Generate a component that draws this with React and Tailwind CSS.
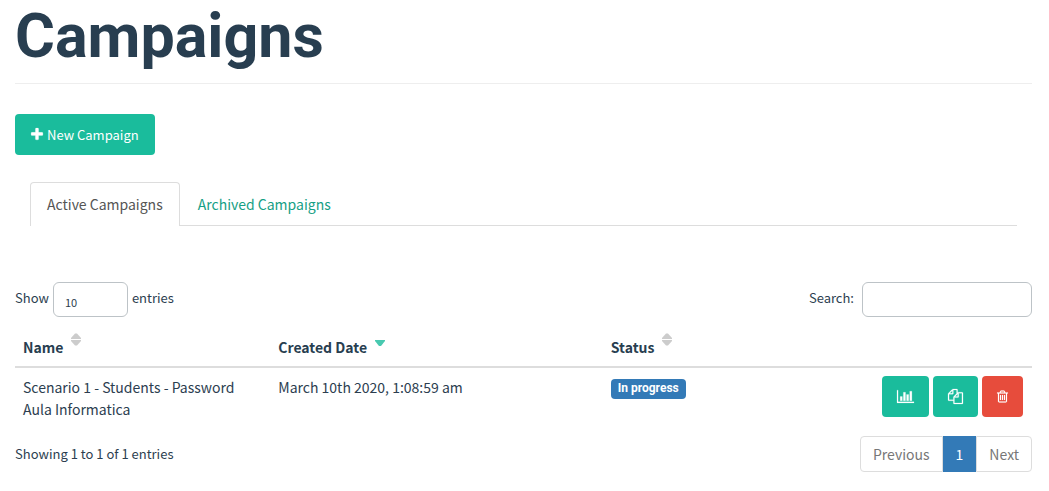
const ICONS = {
  plus: {
    box: '192 0 1408 1792',
    size: 'h-[15px] w-3',
    d: 'M1600 736v192q0 40-28 68t-68 28h-416v416q0 40-28 68t-68 28h-192q-40 0-68-28t-28-68v-416h-416q-40 0-68-28t-28-68v-192q0-40 28-68t68-28h416v-416q0-40 28-68t68-28h192q40 0 68 28t28 68v416h416q40 0 68 28t28 68z',
  },
  chart: {
    box: '0 0 2048 1792',
    size: 'h-[15px] w-[17px]',
    d: 'M640 896v512h-256v-512h256zM1024 384v1024h-256v-1024h256zM2048 1536v128h-2048v-1536h128v1408h1920zM1408 640v768h-256v-768h256zM1792 256v1152h-256v-1152h256z',
  },
  copy: {
    box: '0 0 1792 1792',
    size: 'h-[15px] w-[15px]',
    d: 'M1696 384q40 0 68 28t28 68v1216q0 40-28 68t-68 28h-960q-40 0-68-28t-28-68v-288h-544q-40 0-68-28t-28-68v-672q0-40 20-88t48-76l408-408q28-28 76-48t88-20h416q40 0 68 28t28 68v328q68-40 128-40h416zm-544 213l-299 299h299v-299zm-640-384l-299 299h299v-299zm196 647l316-316v-416h-384v416q0 40-28 68t-68 28h-416v640h512v-256q0-40 20-88t48-76zm956 804v-1152h-384v416q0 40-28 68t-68 28h-416v640h896z',
  },
  trash: {
    box: '192 0 1408 1792',
    size: 'h-[15px] w-[11px]',
    d: 'M704 736v576q0 14-9 23t-23 9h-64q-14 0-23-9t-9-23v-576q0-14 9-23t23-9h64q14 0 23 9t9 23zm256 0v576q0 14-9 23t-23 9h-64q-14 0-23-9t-9-23v-576q0-14 9-23t23-9h64q14 0 23 9t9 23zm256 0v576q0 14-9 23t-23 9h-64q-14 0-23-9t-9-23v-576q0-14 9-23t23-9h64q14 0 23 9t9 23zm128 724v-948h-896v948q0 22 7 40.5t14.5 27 10.5 8.5h832q3 0 10.5-8.5t14.5-27 7-40.5zm-672-1076h448l-48-117q-7-9-17-11h-317q-10 2-17 11zm928 32v64q0 14-9 23t-23 9h-96v948q0 83-47 143.5t-113 60.5h-832q-66 0-113-58.5t-47-141.5v-952h-96q-14 0-23-9t-9-23v-64q0-14 9-23t23-9h309l70-167q15-37 54-63t79-26h320q40 0 79 26t54 63l70 167h309q14 0 23 9t9 23z',
  },
};

function Icon({ name }) {
  const icon = ICONS[name];
  return (
    <svg
      viewBox={icon.box}
      className={`${icon.size} shrink-0 overflow-visible`}
      fill="currentColor"
      stroke="currentColor"
      strokeWidth="24"
      aria-hidden="true"
    >
      <path d={icon.d} />
    </svg>
  );
}

function SortMark({ active }) {
  return (
    <svg viewBox="0 0 10 13" className="-mt-[3px] h-[13px] w-[10px] self-start" aria-hidden="true">
      {active ? (
        <path d="M0 7h10v1L6 13H4L0 8z" fill="#48c9b0" />
      ) : (
        <g fill="#cccccc">
          <path d="M0 6V5L4 0.500h2L10 5V6z" />
          <path d="M0 7h10v1L6 12.500H4L0 8z" />
        </g>
      )}
    </svg>
  );
}

function HeaderCell({ children, active, className }) {
  return (
    <th scope="col" className={`p-2 text-left font-bold ${className}`}>
      <button type="button" className="flex items-center gap-2 font-bold">
        {children}
        <SortMark active={active} />
      </button>
    </th>
  );
}

function ActionButton({ label, icon, className }) {
  return (
    <button type="button" aria-label={label} className={`flex h-[41px] items-center rounded px-[15px] text-white ${className}`}>
      <Icon name={icon} />
    </button>
  );
}

export default function App() {
  return (
    <main className="px-[15px] pb-5 pr-[17px] font-['Noto_Sans_CJK_JP','Noto_Sans_CJK_SC',sans-serif] text-[14px] leading-[22px] text-[#2c3e50]">
      <h1 className="border-b border-[#eeeeee] pt-[3px] pb-[13px] font-['Roboto',sans-serif] text-[61px] leading-[67px] font-bold text-[#283e50]">
        Campaigns
      </h1>

      <button type="button" className="mt-[30px] flex h-[41px] items-center gap-1 rounded bg-[#1abc9c] px-4 text-[13px] text-white">
        <Icon name="plus" />
        New Campaign
      </button>

      <nav className="mx-[15px] mt-[27px] flex border-b border-[#dddddd]">
        <a href="#active" aria-current="page" className="-mb-px rounded-t border border-b-0 border-[#dddddd] bg-white px-4 py-[10px] text-[#555555]">
          Active Campaigns
        </a>
        <a href="#archived" className="px-[18px] pt-[11px] pb-[10px] text-[#16a085]">
          Archived Campaigns
        </a>
      </nav>

      <div className="mt-14 flex items-center justify-between text-[13px] leading-8">
        <label className="flex items-start gap-1">
          Show
          <select defaultValue="10" className="h-[35px] w-[75px] appearance-none rounded-md border border-[#bdc3c7] bg-white px-[11px] pt-[3px] text-[11px]">
            <option>10</option>
            <option>25</option>
            <option>50</option>
            <option>100</option>
          </select>
          entries
        </label>
        <label className="flex items-start gap-2">
          Search:
          <input type="search" className="h-[35px] w-[170px] rounded-md border border-[#bdc3c7] px-3" />
        </label>
      </div>

      <table className="mt-[11px] w-full table-fixed border-collapse">
        <thead>
          <tr className="border-b-2 border-[#dddddd] text-[#283e50]">
            <HeaderCell className="w-[25.1%]">Name</HeaderCell>
            <HeaderCell className="w-[32.7%]" active>Created Date</HeaderCell>
            <HeaderCell className="w-[20%]">Status</HeaderCell>
            <th className="p-2" aria-label="Actions" />
          </tr>
        </thead>
        <tbody>
          <tr className="align-top">
            <td className="p-2">Scenario 1 - Students - Password Aula Informatica</td>
            <td className="p-2">March 10th 2020, 1:08:59 am</td>
            <td className="p-2">
              <span className="mt-[3px] block w-fit rounded bg-[#337ab7] px-[7px] pb-0.5 font-['Roboto',sans-serif] text-[12px] leading-[18px] font-bold text-white">
                In progress
              </span>
            </td>
            <td className="py-2 pr-[9px] pl-2">
              <div className="flex justify-end gap-1">
                <ActionButton label="View results" icon="chart" className="bg-[#1abc9c]" />
                <ActionButton label="Copy campaign" icon="copy" className="bg-[#1abc9c]" />
                <ActionButton label="Delete campaign" icon="trash" className="bg-[#e74c3c]" />
              </div>
            </td>
          </tr>
        </tbody>
      </table>

      <div className="mt-2 flex items-center justify-between">
        <p className="text-[13px]">Showing 1 to 1 of 1 entries</p>
        <nav aria-label="Pages" className="flex text-[#777777]">
          <a href="#previous" className="rounded-l border border-[#dddddd] px-3 py-[6px]">Previous</a>
          <a href="#1" aria-current="page" className="border border-[#337ab7] bg-[#337ab7] px-3 py-[6px] text-white">1</a>
          <a href="#next" className="rounded-r border border-[#dddddd] px-3 py-[6px]">Next</a>
        </nav>
      </div>
    </main>
  );
}
